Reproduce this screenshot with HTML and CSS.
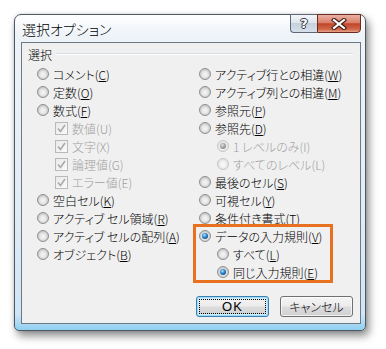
FILE: index.html
```html
<!DOCTYPE html>
<html lang="ja">
<head>
    <meta charset="utf-8">
    <title>選択オプション</title>
    <link rel="stylesheet" href="styles.css">
</head>
<body>
<div class="window">
    <div class="titlebar">
        <span class="title">選択オプション</span>
        <div class="capbuttons">
            <div class="capbtn help"><span>?</span></div>
            <div class="capbtn close">
                <svg width="16" height="12" viewBox="0 0 16 12">
                    <path d="M3 2 L13 10 M13 2 L3 10" stroke="#3a1a14" stroke-width="4.2" stroke-linecap="square" fill="none"/>
                    <path d="M3 2 L13 10 M13 2 L3 10" stroke="#ffffff" stroke-width="2.2" stroke-linecap="square" fill="none"/>
                </svg>
            </div>
        </div>
    </div>

    <div class="client">
        <div class="group-head"><span>選択</span></div>

        <div class="columns">
            <!-- left column -->
            <div class="col left">
                <div class="opt"><span class="radio"></span>コメント(<u>C</u>)</div>
                <div class="opt"><span class="radio"></span>定数(<u>O</u>)</div>
                <div class="opt"><span class="radio"></span>数式(<u>F</u>)</div>
                <div class="opt sub off"><span class="check"><svg width="11" height="11" viewBox="0 0 11 11"><path d="M2 5.5 L4.5 8.5 L9 2" stroke="#a9a9a9" stroke-width="1.6" fill="none"/></svg></span>数値(U)</div>
                <div class="opt sub off"><span class="check"><svg width="11" height="11" viewBox="0 0 11 11"><path d="M2 5.5 L4.5 8.5 L9 2" stroke="#a9a9a9" stroke-width="1.6" fill="none"/></svg></span>文字(X)</div>
                <div class="opt sub off"><span class="check"><svg width="11" height="11" viewBox="0 0 11 11"><path d="M2 5.5 L4.5 8.5 L9 2" stroke="#a9a9a9" stroke-width="1.6" fill="none"/></svg></span>論理値(G)</div>
                <div class="opt sub off"><span class="check"><svg width="11" height="11" viewBox="0 0 11 11"><path d="M2 5.5 L4.5 8.5 L9 2" stroke="#a9a9a9" stroke-width="1.6" fill="none"/></svg></span>エラー値(E)</div>
                <div class="opt"><span class="radio"></span>空白セル(<u>K</u>)</div>
                <div class="opt"><span class="radio"></span>アクティブ セル領域(<u>R</u>)</div>
                <div class="opt"><span class="radio"></span>アクティブ セルの配列(<u>A</u>)</div>
                <div class="opt"><span class="radio"></span>オブジェクト(<u>B</u>)</div>
            </div>

            <!-- right column -->
            <div class="col right">
                <div class="opt"><span class="radio"></span>アクティブ行との相違(<u>W</u>)</div>
                <div class="opt"><span class="radio"></span>アクティブ列との相違(<u>M</u>)</div>
                <div class="opt"><span class="radio"></span>参照元(<u>P</u>)</div>
                <div class="opt"><span class="radio"></span>参照先(<u>D</u>)</div>
                <div class="opt sub off"><span class="radio on"></span>1 レベルのみ(I)</div>
                <div class="opt sub off"><span class="radio"></span>すべてのレベル(L)</div>
                <div class="opt"><span class="radio"></span>最後のセル(<u>S</u>)</div>
                <div class="opt"><span class="radio"></span>可視セル(<u>Y</u>)</div>
                <div class="opt"><span class="radio"></span>条件付き書式(<u>T</u>)</div>
                <div class="highlight">
                    <div class="opt"><span class="radio on"></span>データの入力規則(<u>V</u>)</div>
                    <div class="opt sub"><span class="radio"></span>すべて(<u>L</u>)</div>
                    <div class="opt sub"><span class="radio on"></span>同じ入力規則(<u>E</u>)</div>
                </div>
            </div>
        </div>

        <div class="buttons">
            <div class="btn default">OK</div>
            <div class="btn">キャンセル</div>
        </div>
    </div>
</div>
</body>
</html>
```

FILE: styles.css
```css
html, body
{
    margin: 0;
    background: #ffffff;
}

body
{
    width: 386px;
    height: 349px;
    padding: 14px 0 0 14px;
    box-sizing: border-box;
    font-family: "Noto Sans CJK JP", "Noto Sans", sans-serif;
    font-size: 12px;
    font-weight: 300;
    font-feature-settings: "palt";
    color: #000;
}

.window
{
    width: 352px;
    height: 317px;
    box-sizing: border-box;
    border: 1px solid #4d5864;
    border-radius: 7px 7px 5px 5px;
    padding-bottom: 6px;
    display: flex;
    flex-direction: column;
    background: linear-gradient(#ffffff 0px, #eef3f8 20px, #e2ecf5 60%, #cfe5f6 95%, #8fd0f2 100%);
    box-shadow: 3px 5px 9px rgba(0,0,0,0.45), 0 0 3px rgba(0,0,0,0.15);
}

/* ======== title bar ======== */
.titlebar
{
    height: 27px;
    display: flex;
    align-items: center;
    padding-left: 7px;
}

.title
{
    font-size: 14px;
    color: #000;
    text-shadow: 0 0 6px #ffffff;
    margin-top: 1px;
}

.capbuttons
{
    margin-left: auto;
    margin-right: 4px;
    margin-top: -1px;
    align-self: flex-start;
    display: flex;
}

.capbtn
{
    height: 19px;
    box-sizing: border-box;
    display: flex;
    align-items: center;
    justify-content: center;
}

.help
{
    width: 27px;
    border: 1px solid #5c6876;
    border-right: 0;
    border-radius: 0 0 0 4px;
    background: linear-gradient(#f3f6f9 0%, #dde5ed 45%, #c6d1dc 50%, #d6e0ea 100%);
    font-family: "DejaVu Sans", sans-serif;
    font-weight: bold;
    font-size: 13px;
    color: #ffffff;
    text-shadow: 1px 0 0 #2e3640, -1px 0 0 #2e3640, 0 1px 0 #2e3640, 0 -1px 0 #2e3640;
}

.close
{
    width: 44px;
    border: 1px solid #6b2a1e;
    border-radius: 0 0 4px 0;
    background: linear-gradient(#eab1a3 0%, #d9806b 45%, #c24528 52%, #d06a4c 85%, #e9a38c 100%);
}

/* ======== client area ======== */
.client
{
    flex: 1;
    margin: 0 4px 0 6px;
    border: 1px solid #6c7884;
    background: #f0f0f0;
    padding: 4px 7px 0 6px;
    display: flex;
    flex-direction: column;
}

.group-head
{
    height: 14px;
    display: flex;
    align-items: center;
    gap: 4px;
}

.group-head::after
{
    content: "";
    flex: 1;
    height: 0;
    border-top: 1px solid #d5dfe5;
    border-bottom: 1px solid #ffffff;
}

.columns
{
    display: flex;
    margin-top: 4px;
    padding-left: 9px;
}

.col.left
{
    width: 162px;
}

.col.right
{
    flex: 1;
}

.opt
{
    height: 18px;
    display: flex;
    align-items: center;
    white-space: nowrap;
}

.opt u
{
    text-decoration: underline;
    text-underline-offset: 1px;
}

.sub
{
    margin-left: 18px;
}

.off
{
    color: #a0a0a0;
}

.radio
{
    width: 12px;
    height: 12px;
    box-sizing: border-box;
    border-radius: 50%;
    border: 1px solid #8e8f8f;
    background: radial-gradient(circle at 50% 55%, #f6f6f6 0px, #e6e6e6 3px, #c9c9c9 5px, #d8d8d8 6px);
    margin-right: 4px;
    flex: none;
    position: relative;
}

.off .radio
{
    border-color: #c6c6c6;
    background: radial-gradient(circle at 50% 55%, #fbfbfb 0px, #f0f0f0 3px, #e2e2e2 5px, #eaeaea 6px);
}

.radio.on::after
{
    content: "";
    position: absolute;
    left: 2px;
    top: 2px;
    width: 6px;
    height: 6px;
    border-radius: 50%;
    background: radial-gradient(circle at 40% 35%, #b4e6ff 0px, #3a8fd6 2px, #0f4f8c 4px);
}

.off .radio.on::after
{
    background: radial-gradient(circle at 40% 35%, #e8e8e8 0px, #aaaaaa 2px, #8c8c8c 4px);
}

.check
{
    width: 13px;
    height: 13px;
    box-sizing: border-box;
    border: 1px solid #b9b9b9;
    background: linear-gradient(135deg, #e9e9e9, #fafafa);
    margin-right: 4px;
    flex: none;
    display: flex;
    align-items: center;
    justify-content: center;
}

.highlight
{
    position: relative;
}

.highlight::before
{
    content: "";
    position: absolute;
    top: -3px;
    left: -6px;
    right: 20px;
    bottom: -2px;
    border: 3px solid #e8711f;
}

/* ======== buttons ======== */
.buttons
{
    display: flex;
    justify-content: flex-end;
    gap: 11px;
    margin-top: 15px;
}

.btn
{
    width: 73px;
    height: 21px;
    box-sizing: border-box;
    border: 1px solid #707070;
    border-radius: 3px;
    background: linear-gradient(#f4f4f4 0%, #ececec 48%, #dddddd 52%, #d0d0d0 100%);
    box-shadow: inset 0 0 0 1px rgba(255,255,255,0.7);
    display: flex;
    align-items: center;
    justify-content: center;
    position: relative;
}

.btn.default
{
    border-color: #3c7fb1;
    box-shadow: inset 0 0 0 1px #9fdcf8, inset 0 0 0 2px #cdeefc;
    font-family: "Liberation Sans", sans-serif;
    font-size: 13px;
    font-weight: 400;
    letter-spacing: 1px;
}

.btn.default::after
{
    content: "";
    position: absolute;
    top: 2px;
    left: 2px;
    right: 2px;
    bottom: 2px;
    border: 1px dotted #000;
}
```
